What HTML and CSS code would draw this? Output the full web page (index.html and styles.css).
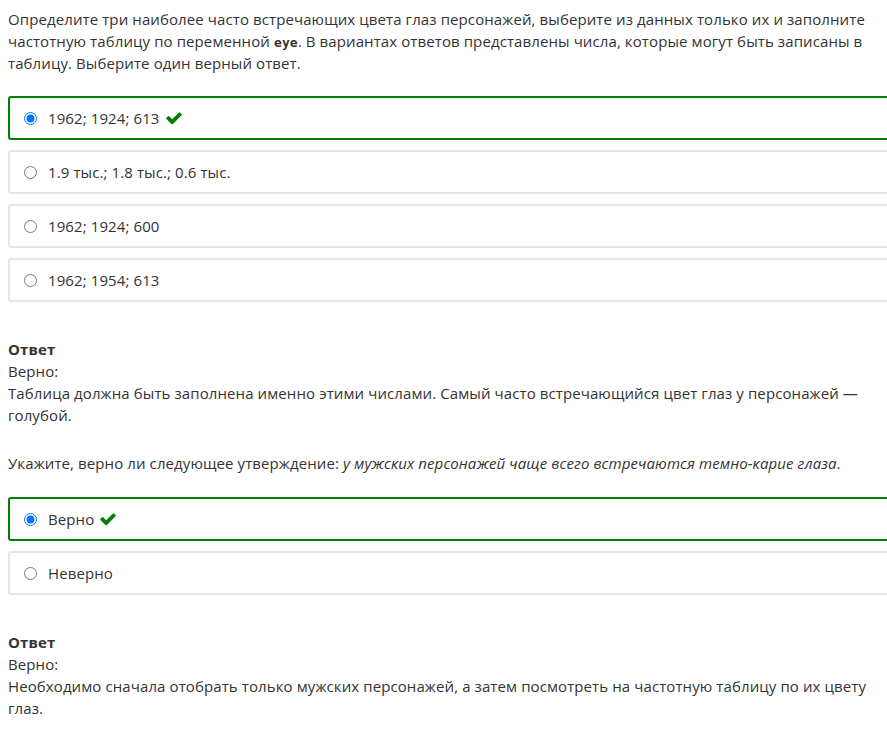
FILE: index.html
```html
<!DOCTYPE html>
<html lang="ru">
<head>
<meta charset="utf-8">
<link rel="stylesheet" href="styles.css">
</head>
<body>
<div class="clip">
<div class="page">
  <section class="question">
    <p class="q-text">Определите три наиболее часто встречающих цвета глаз персонажей, выберите из данных только их и заполните частотную таблицу по переменной <code class="var">eye</code>. В вариантах ответов представлены числа, которые могут быть записаны в таблицу. Выберите один верный ответ.</p>
    <div class="options">
      <label class="option correct"><input type="radio" name="q1" checked><span>1962; 1924; 613</span><svg class="check" viewBox="0 0 1792 1792"><path d="M1671 566q0 40-28 68l-724 724-136 136q-28 28-68 28t-68-28l-136-136-362-362q-28-28-28-68t28-68l136-136q28-28 68-28t68 28l294 295 656-657q28-28 68-28t68 28l136 136q28 28 28 68z"/></svg></label>
      <label class="option"><input type="radio" name="q1"><span>1.9 тыс.; 1.8 тыс.; 0.6 тыс.</span></label>
      <label class="option"><input type="radio" name="q1"><span>1962; 1924; 600</span></label>
      <label class="option"><input type="radio" name="q1"><span>1962; 1954; 613</span></label>
    </div>
    <div class="answer">
      <div class="answer-title">Ответ</div>
      <div>Верно:</div>
      <div class="answer-text">Таблица должна быть заполнена именно этими числами. Самый часто встречающийся цвет глаз у персонажей — голубой.</div>
    </div>
  </section>
  <section class="question second">
    <p class="q-text">Укажите, верно ли следующее утверждение: <em>у мужских персонажей чаще всего встречаются темно-карие глаза</em>.</p>
    <div class="options">
      <label class="option correct"><input type="radio" name="q2" checked><span>Верно</span><svg class="check" viewBox="0 0 1792 1792"><path d="M1671 566q0 40-28 68l-724 724-136 136q-28 28-68 28t-68-28l-136-136-362-362q-28-28-28-68t28-68l136-136q28-28 68-28t68 28l294 295 656-657q28-28 68-28t68 28l136 136q28 28 28 68z"/></svg></label>
      <label class="option"><input type="radio" name="q2"><span>Неверно</span></label>
    </div>
    <div class="answer">
      <div class="answer-title">Ответ</div>
      <div>Верно:</div>
      <div class="answer-text">Необходимо сначала отобрать только мужских персонажей, а затем посмотреть на частотную таблицу по их цвету глаз.</div>
    </div>
  </section>
</div>
</div>
</body>
</html>
```

FILE: styles.css
```css
body {
  margin: 8px 0 8px 8px;
  background: #fff;
  color: #333;
  font-family: "Open Sans", "Noto Sans", sans-serif;
  font-size: 15px;
  line-height: 22px;
  letter-spacing: 0.1px;
}
.clip {
  overflow: hidden;
}
.page {
  width: 895px;
}
.q-text,
.answer-text {
  max-width: 866px;
}
.q-text {
  margin: 0 0 22px 0;
}
.var {
  font-family: "DejaVu Sans Mono", "Liberation Mono", monospace;
  font-weight: bold;
  font-size: 13px;
  line-height: 1;
}
.options {
  display: flex;
  flex-direction: column;
  gap: 10px;
}
.option {
  display: flex;
  align-items: center;
  height: 44px;
  box-sizing: border-box;
  border: 2px solid #e5e5e5;
  border-radius: 3px;
  padding-left: 14px;
}
.option.correct {
  border-color: #008000;
}
.option input {
  margin: 0 11px 0 0;
  width: 13px;
  height: 13px;
}
.check {
  width: 18px;
  height: 18px;
  margin-left: 5px;
  fill: #008000;
}
.answer {
  margin-top: 36px;
}
.answer-title {
  font-weight: bold;
}
.second {
  margin-top: 26px;
}
.second .q-text {
  margin-bottom: 23px;
}
```
